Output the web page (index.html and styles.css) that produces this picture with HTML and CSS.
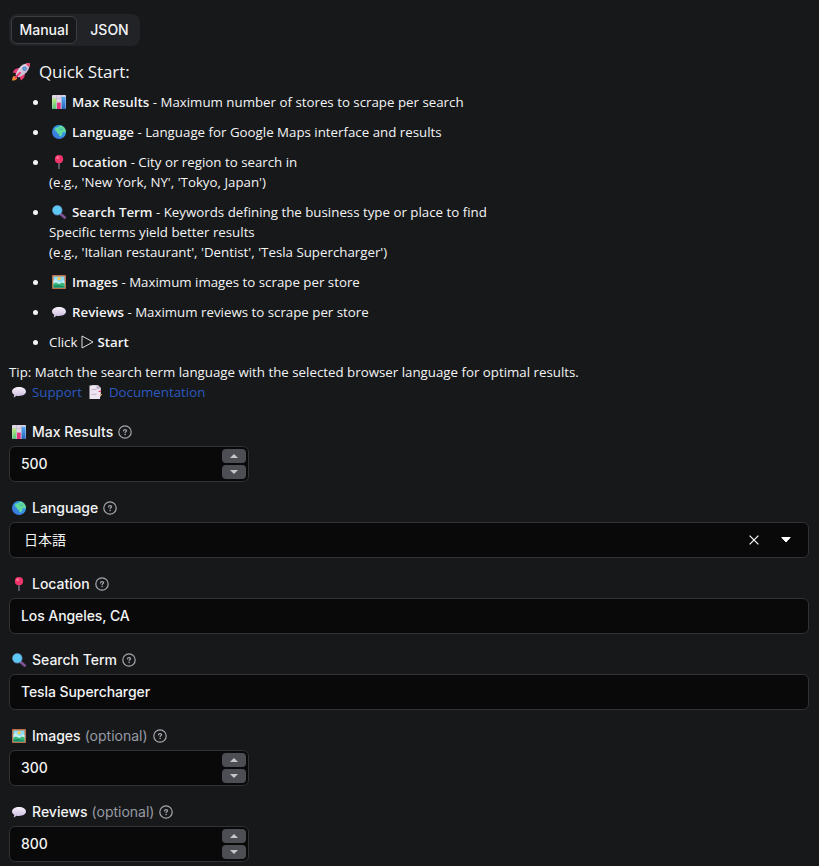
FILE: index.html
```html
<!DOCTYPE html>
<html lang="en">
<head>
    <meta charset="UTF-8">
    <meta name="viewport" content="width=device-width, initial-scale=1.0">
    <title>Google Maps Store Scraper</title>
    <link rel="stylesheet" href="styles.css">
</head>
<body>
    <!-- Shared icons -->
    <svg class="sprite" width="0" height="0">
        <defs>
            <linearGradient id="g-green" x1="0" y1="0" x2="0" y2="1"><stop offset="0" stop-color="#b9ee74"/><stop offset="1" stop-color="#4fc27f"/></linearGradient>
            <linearGradient id="g-blue" x1="0" y1="0" x2="0" y2="1"><stop offset="0" stop-color="#54aaf5"/><stop offset="1" stop-color="#2465bd"/></linearGradient>
            <linearGradient id="g-globe" x1="1" y1="0" x2="0" y2="1"><stop offset="0" stop-color="#35b5ec"/><stop offset="1" stop-color="#3a6bd8"/></linearGradient>
            <linearGradient id="g-bubble" x1="0" y1="0" x2="0" y2="1"><stop offset="0" stop-color="#f7f2fb"/><stop offset="1" stop-color="#c9b8dd"/></linearGradient>
            <linearGradient id="g-body" x1="0" y1="0" x2="1" y2="1"><stop offset="0" stop-color="#f1e7f2"/><stop offset="1" stop-color="#b9a5c4"/></linearGradient>
        </defs>
        <symbol id="chart" viewBox="0 0 14 14">
            <rect width="14" height="14" rx="1" fill="#dfd5e5"/>
            <path d="M4.5 0V14M9.3 0V14M0 3.5H14" stroke="#bdb0c8" stroke-width=".6"/>
            <rect x=".4" y="3.5" width="3.8" height="10.5" fill="url(#g-green)"/>
            <rect x="5" y="7.6" width="3.7" height="6.4" fill="#e3317c"/>
            <rect x="9.6" y="1.8" width="4" height="12.2" fill="url(#g-blue)"/>
        </symbol>
        <symbol id="globe" viewBox="0 0 14 14">
            <circle cx="7" cy="7" r="7" fill="url(#g-globe)"/>
            <path d="M3.2 3.2C4.6 2.3 6 2.6 6.8 2L8.6.6C11.8 1.4 13.8 4 14 6.8L12.6 7.6 11.4 6.8 10.4 7.6 10.2 9.6 8.2 11.8 7.2 10.8 7 8.8 5.2 8 4.4 6.2 3 5.4Z" fill="#62d99b"/>
            <path d="M7.4 3.4 8.6 4.4 10.7 4.2" fill="none" stroke="#2aa8ad" stroke-width=".8"/>
        </symbol>
        <symbol id="pin" viewBox="0 0 14 14">
            <path d="M7 7.5V13.6" stroke="#998ca8" stroke-width="1.1" stroke-linecap="round"/>
            <circle cx="7" cy="4.2" r="4.1" fill="#f0356c"/>
            <circle cx="5.7" cy="2.7" r="1.4" fill="#ff7690"/>
        </symbol>
        <symbol id="search" viewBox="0 0 14 14">
            <path d="M9 9.2 12.6 12.5" stroke="#805191" stroke-width="2.7" stroke-linecap="round"/>
            <circle cx="5.3" cy="5.3" r="5.2" fill="#5877a5"/>
            <circle cx="5.3" cy="5.3" r="4.5" fill="#5dc9f2"/>
        </symbol>
        <symbol id="picture" viewBox="0 0 14 14">
            <rect width="14" height="14" rx=".8" fill="#bd714b"/>
            <rect x="1.5" y="1.5" width="11" height="11" fill="#8adcf6"/>
            <circle cx="7.2" cy="3.7" r="1.6" fill="#ffc94c"/>
            <path d="M1.5 5.5 4 3.8 6.3 6.4 9 7 11 5 12.5 6.2V9H1.5Z" fill="#c6edf5"/>
            <path d="M1.5 8.5 4 7.4 7.2 9 10 7.6 12.5 8.4V12.5H1.5Z" fill="#38b878"/>
            <path d="M1.5 10.6 6 9.9 12.5 11.5V12.5H1.5Z" fill="#188d67"/>
        </symbol>
        <symbol id="bubble" viewBox="0 0 14 14">
            <path d="M7 2C11 2 14 3.9 14 6.6S11 11 7 11C6 11 5.2 10.9 4.4 10.7 3.7 11.5 2.7 12.2 1.5 12.2 2.1 11.5 2.3 10.7 2.1 9.8.8 9 0 7.9 0 6.6 0 3.9 3 2 7 2Z" fill="url(#g-bubble)"/>
        </symbol>
        <symbol id="doc" viewBox="0 0 14 14">
            <path d="M2.7 0H9L12 3V11.5H2.7Z" fill="#c9bdd1"/>
            <path d="M.5 .5H7.6L11 3.8V14H.5Z" fill="#eee5f1"/>
            <path d="M7.6 .5V3.8H11Z" fill="#b4a4bf"/>
            <path d="M2.5 4.5H7.5M2.5 9.3H7.5" stroke="#b3a5bf" stroke-width=".8"/>
            <path d="M9.5 6.4H12" stroke="#e44b7b" stroke-width="1.2"/>
            <path d="M11 9.7H13" stroke="#e59a55" stroke-width="1.3"/>
        </symbol>
        <symbol id="rocket" viewBox="0 0 18 18">
            <path d="M3.1 12.8C.6 12.9.2 15 .1 17.4 2.7 17.4 4.9 17 5.2 14.9Z" fill="#ef8d30"/>
            <path d="M7.4 5.2C4.5 4.8 2 6.3.6 9.4L5.2 10.5ZM12.8 10.6C13.2 13.5 11.8 16 8.8 17.5L7.5 12.8Z" fill="#e93d72"/>
            <path d="M17.9.1C12.8.2 9.2 2 6.6 5.8L3.5 11.5 6.7 14.5 12.2 11.5C15.9 9 17.8 5.2 17.9.1Z" fill="url(#g-body)"/>
            <path d="M17.9.1C16.2.1 14.8.3 13.6.8L17.2 4.3C17.6 3 17.9 1.6 17.9.1Z" fill="#ed416e"/>
            <path d="M8 9.9 3.4 14.6" stroke="#ed3a70" stroke-width="2" stroke-linecap="round"/>
            <circle cx="12.5" cy="5.6" r="2.2" fill="#466db0"/>
            <circle cx="12.5" cy="5.6" r="1.4" fill="#62b5ef"/>
        </symbol>
        <symbol id="help" viewBox="0 0 14 14">
            <circle cx="7" cy="7" r="6.2" fill="none" stroke="#a4a7ac" stroke-width="1.2"/>
            <path d="M5.5 5.9C5.6 5 6.2 4.6 7.1 4.6 8 4.6 8.6 5.1 8.6 5.8 8.6 6.8 7.1 6.9 7.1 7.7" fill="none" stroke="#a4a7ac" stroke-width="1.2" stroke-linecap="round"/>
            <circle cx="7.1" cy="9.5" r=".75" fill="#a4a7ac"/>
        </symbol>
    </svg>

    <div class="tabs">
        <button class="tab active">Manual</button>
        <button class="tab">JSON</button>
    </div>

    <div class="readme">
        <h3 class="title"><svg class="rocket"><use href="#rocket"/></svg><span>Quick Start:</span></h3>
        <ul class="steps">
            <li><svg class="emoji"><use href="#chart"/></svg><b>Max Results</b> - Maximum number of stores to scrape per search</li>
            <li><svg class="emoji"><use href="#globe"/></svg><b>Language</b> - Language for Google Maps interface and results</li>
            <li><svg class="emoji"><use href="#pin"/></svg><b>Location</b> - City or region to search in<br>(e.g., 'New York, NY', 'Tokyo, Japan')</li>
            <li><svg class="emoji"><use href="#search"/></svg><b>Search Term</b> - Keywords defining the business type or place to find<br>Specific terms yield better results<br>(e.g., 'Italian restaurant', 'Dentist', 'Tesla Supercharger')</li>
            <li><svg class="emoji"><use href="#picture"/></svg><b>Images</b> - Maximum images to scrape per store</li>
            <li><svg class="emoji"><use href="#bubble"/></svg><b>Reviews</b> - Maximum reviews to scrape per store</li>
            <li>Click <svg class="play" viewBox="0 0 13 14"><path d="M1 1V13L12 7Z"/></svg> <b>Start</b></li>
        </ul>
        <p class="tip">Tip: Match the search term language with the selected browser language for optimal results.</p>
        <p class="links">
            <svg class="emoji"><use href="#bubble"/></svg><a href="#">Support</a>
            <svg class="emoji doc"><use href="#doc"/></svg><a href="#">Documentation</a>
        </p>
    </div>

    <form class="fields">
        <div class="field">
            <div class="label"><svg class="emoji"><use href="#chart"/></svg>Max Results<svg class="help"><use href="#help"/></svg></div>
            <div class="input number">
                <span>500</span>
                <div class="stepper">
                    <button type="button" class="step"><i class="arrow up"></i></button>
                    <button type="button" class="step"><i class="arrow down"></i></button>
                </div>
            </div>
        </div>

        <div class="field">
            <div class="label"><svg class="emoji"><use href="#globe"/></svg>Language<svg class="help"><use href="#help"/></svg></div>
            <div class="input select">
                <span class="value">日本語</span>
                <svg class="clear" viewBox="0 0 10 10"><path d="M.6.6 9.4 9.4M9.4.6.6 9.4"/></svg>
                <svg class="caret" viewBox="0 0 10 6"><path d="M.8.5H9.2L5 5Z"/></svg>
            </div>
        </div>

        <div class="field">
            <div class="label"><svg class="emoji"><use href="#pin"/></svg>Location<svg class="help"><use href="#help"/></svg></div>
            <div class="input">Los Angeles, CA</div>
        </div>

        <div class="field">
            <div class="label"><svg class="emoji"><use href="#search"/></svg>Search Term<svg class="help"><use href="#help"/></svg></div>
            <div class="input">Tesla Supercharger</div>
        </div>

        <div class="field">
            <div class="label"><svg class="emoji"><use href="#picture"/></svg>Images<span class="optional">(optional)</span><svg class="help"><use href="#help"/></svg></div>
            <div class="input number">
                <span>300</span>
                <div class="stepper">
                    <button type="button" class="step"><i class="arrow up"></i></button>
                    <button type="button" class="step"><i class="arrow down"></i></button>
                </div>
            </div>
        </div>

        <div class="field">
            <div class="label"><svg class="emoji"><use href="#bubble"/></svg>Reviews<span class="optional">(optional)</span><svg class="help"><use href="#help"/></svg></div>
            <div class="input number">
                <span>800</span>
                <div class="stepper">
                    <button type="button" class="step"><i class="arrow up"></i></button>
                    <button type="button" class="step"><i class="arrow down"></i></button>
                </div>
            </div>
        </div>
    </form>
</body>
</html>
```
FILE: styles.css
```css
:root {
    --bg: #17181a;
    --panel: #222327;
    --input: #090909;
    --border: #303236;
    --text: #f3f4f5;
    --muted: #969ba4;
    --link: #2b59bf;
}

* {
    box-sizing: border-box;
}

body {
    margin: 0;
    padding: 14px 10px 0 9px;
    height: 866px;
    overflow: hidden;
    background-color: var(--bg);
    color: var(--text);
    font: 500 14px/20px Inter, "Noto Sans CJK JP", sans-serif;
}

.sprite {
    position: absolute;
}

.tabs {
    display: flex;
    gap: 4px;
    width: 131px;
    height: 32px;
    padding: 2px;
    border-radius: 8px;
    background-color: var(--panel);
}

.tab {
    flex: 1;
    padding: 0;
    border: 1px solid transparent;
    border-radius: 6px;
    background: none;
    color: var(--text);
    font: inherit;
}

.tab.active {
    flex: 0 0 66px;
    border-color: #3b3d42;
    background-color: var(--bg);
}

/* Quick start text */
.readme {
    font: 400 13.3px/20px "Open Sans", "Segoe UI", sans-serif;
}

.title {
    display: flex;
    align-items: center;
    gap: 9px;
    height: 24px;
    margin: 14px 0 8px;
    padding-left: 3px;
    font-size: 17px;
    font-weight: 400;
    letter-spacing: -0.1px;
}

.rocket {
    width: 18px;
    height: 18px;
}

.steps {
    margin: 0;
    padding-left: 40px;
}

.steps li {
    margin-bottom: 10px;
}

.steps b {
    font-weight: 600;
}

.emoji {
    flex: none;
    width: 14px;
    height: 14px;
    margin: 0 6px 0 3px;
    vertical-align: -2px;
}

.play {
    width: 13px;
    height: 14px;
    vertical-align: -2px;
    fill: none;
    stroke: #dedede;
}

.tip,
.links {
    margin: 0;
}

.links {
    display: flex;
    align-items: center;
}

.links a {
    color: var(--link);
    text-decoration: none;
}

.emoji.doc {
    margin-left: 7px;
}

/* Form */
.fields {
    display: flex;
    flex-direction: column;
    gap: 16px;
    margin-top: 20px;
}

.field {
    display: flex;
    flex-direction: column;
    gap: 4px;
}

.label {
    display: flex;
    align-items: center;
    height: 20px;
}

.optional {
    margin-left: 4px;
    color: var(--muted);
    font-weight: 400;
}

.help {
    width: 14px;
    height: 14px;
    margin-left: 5px;
}

.input {
    display: flex;
    align-items: center;
    height: 36px;
    padding: 0 11px;
    border: 1px solid var(--border);
    border-radius: 6px;
    background-color: var(--input);
    letter-spacing: -0.08px;
}

.input.number {
    justify-content: space-between;
    width: 240px;
    padding-right: 2px;
}

.stepper {
    display: flex;
    flex-direction: column;
    gap: 2px;
}

.step {
    display: flex;
    align-items: center;
    justify-content: center;
    width: 24px;
    height: 14px;
    padding: 0;
    border: none;
    border-radius: 4px;
    background-color: #4c4e53;
}

.arrow {
    border: 4px solid transparent;
}

.arrow.up {
    border-top: none;
    border-bottom-color: #c5c6c9;
}

.arrow.down {
    border-bottom: none;
    border-top-color: #c5c6c9;
}

.input.select {
    padding: 0 17px 0 14px;
}

.value {
    flex: 1;
    font-weight: 400;
    letter-spacing: 0;
}

.clear {
    width: 10px;
    height: 10px;
    margin-right: 22px;
    fill: none;
    stroke: #f3f4f5;
    stroke-width: 1.3;
}

.caret {
    width: 10px;
    height: 6px;
    fill: #ffffff;
    stroke: #ffffff;
    stroke-linejoin: round;
}
```
